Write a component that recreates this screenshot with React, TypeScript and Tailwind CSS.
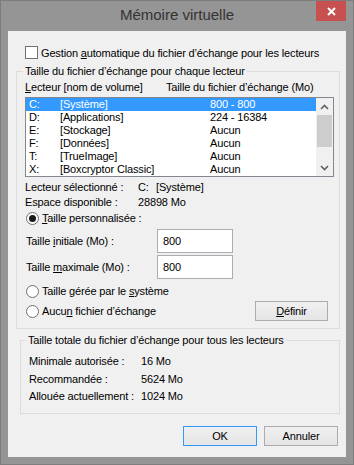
import React from "react";

const rows = [
  { l: "C:", n: "[Système]", s: "800 - 800", sel: true },
  { l: "D:", n: "[Applications]", s: "224 - 16384" },
  { l: "E:", n: "[Stockage]", s: "Aucun" },
  { l: "F:", n: "[Données]", s: "Aucun" },
  { l: "T:", n: "[TrueImage]", s: "Aucun" },
  { l: "X:", n: "[Boxcryptor Classic]", s: "Aucun" },
];

function Radio({ checked }: { checked?: boolean }) {
  return (
    <div className="w-[13px] h-[13px] rounded-full border border-[#707070] bg-white flex items-center justify-center shrink-0">
      {checked && <div className="w-[7px] h-[7px] rounded-full bg-[#1a1a1a]" />}
    </div>
  );
}

function Chevron({ up }: { up?: boolean }) {
  return (
    <svg width="9" height="6" viewBox="0 0 9 6">
      <polyline
        points={up ? "1,5 4.5,1.5 8,5" : "1,1 4.5,4.5 8,1"}
        fill="none"
        stroke="#606060"
        strokeWidth="1.6"
      />
    </svg>
  );
}

export default function App() {
  const font = { fontFamily: '"Liberation Sans", Arial, sans-serif' };
  return (
    <div
      className="w-[354px] h-[465px] bg-[#959595] border border-[#7d7d7d] flex flex-col text-[11px] text-black tracking-[-0.15px]"
      style={font}
    >
      {/* Title bar */}
      <div className="h-[30px] grid grid-cols-[1fr_auto_1fr] items-start">
        <div />
        <div className="h-[29px] flex items-center text-[15px] text-[#333333] tracking-normal">Mémoire virtuelle</div>
        <div className="flex justify-end pr-[7px]">
          <div className="w-[30px] h-[20px] bg-[#c75050] flex items-center justify-center">
            <svg width="9" height="9" viewBox="0 0 9 9">
              <path d="M1 1 L8 8 M8 1 L1 8" stroke="white" strokeWidth="2" />
            </svg>
          </div>
        </div>
      </div>

      {/* Client area */}
      <div className="ml-[7px] w-[338px] h-[426px] bg-[#f0f0f0] flex flex-col leading-[14px]">
        <div className="pt-[15px] pl-[17px] flex items-center h-[28px] gap-[3px]">
          <div className="w-[13px] h-[13px] border border-[#707070] bg-white shrink-0" />
          <span>
            Gestion <span className="underline">a</span>utomatique du fichier d’échange pour les lecteurs
          </span>
        </div>

        <fieldset className="mt-[5px] ml-[8px] w-[324px] border border-[#dcdcdc] pb-[7px]">
          <legend className="ml-[6px] px-[2px] h-[15px] leading-[15px]">
            Taille du fichier d’échange pour chaque lecteur
          </legend>
          <div className="mt-[1px] h-[14px] flex items-center pl-[8px]">
            <span className="w-[141px]">
              <span className="underline">L</span>ecteur [nom de volume]
            </span>
            <span>Taille du fichier d’échange (Mo)</span>
          </div>
          <div className="mt-[3px] ml-[8px] w-[309px] h-[80px] border border-[#828790] bg-white flex">
            <div className="flex-1 flex flex-col">
              {rows.map((r) => (
                <div
                  key={r.l}
                  className={
                    "h-[13px] flex items-center leading-[13px] " +
                    (r.sel ? "bg-[#3399ff] text-white" : "")
                  }
                >
                  <span className="w-[34px] pl-[3px]">{r.l}</span>
                  <span className="w-[150px]">{r.n}</span>
                  <span>{r.s}</span>
                </div>
              ))}
            </div>
            <div className="w-[17px] bg-[#f0f0f0] flex flex-col">
              <div className="h-[17px] flex items-center justify-center">
                <Chevron up />
              </div>
              <div className="h-[32px] bg-[#cdcdcd] mx-[1px]" />
              <div className="flex-1" />
              <div className="h-[17px] flex items-center justify-center">
                <Chevron />
              </div>
            </div>
          </div>

          <div className="mt-[3px] h-[14px] pl-[8px] flex items-center">
            <span className="w-[113px]">Lecteur sélectionné :</span>
            <span className="w-[18px]">C:</span>
            <span>[Système]</span>
          </div>
          <div className="mt-[1px] h-[14px] pl-[8px] flex items-center">
            <span className="w-[113px]">Espace disponible :</span>
            <span>28898 Mo</span>
          </div>
          <div className="mt-[2px] h-[14px] pl-[9px] flex items-center gap-[3px]">
            <Radio checked />
            <span>
              <span className="underline">T</span>aille personnalisée :
            </span>
          </div>
          <div className="mt-[4px] h-[24px] pl-[9px] flex items-center">
            <span className="w-[131px]">
              Taille <span className="underline">i</span>nitiale (Mo) :
            </span>
            <div className="w-[76px] h-[24px] border border-[#abadb3] bg-white pl-[5px] flex items-center">
              800
            </div>
          </div>
          <div className="mt-[2px] h-[24px] pl-[9px] flex items-center">
            <span className="w-[131px]">
              Taille <span className="underline">m</span>aximale (Mo) :
            </span>
            <div className="w-[76px] h-[24px] border border-[#abadb3] bg-white pl-[5px] flex items-center">
              800
            </div>
          </div>
          <div className="mt-[5px] h-[14px] pl-[9px] flex items-center gap-[3px]">
            <Radio />
            <span>
              Taille gérée par le <span className="underline">s</span>ystème
            </span>
          </div>
          <div className="mt-[3px] h-[20px] pl-[9px] pr-[11px] flex items-center justify-between">
            <div className="flex items-center gap-[3px]">
              <Radio />
              <span>
                Aucu<span className="underline">n</span> fichier d’échange
              </span>
            </div>
            <div className="w-[73px] h-[20px] border border-[#acacac] bg-gradient-to-b from-[#f0f0f0] to-[#e5e5e5] flex items-center justify-center">
              <span>
                <span className="underline">D</span>éfinir
              </span>
            </div>
          </div>
        </fieldset>

        <fieldset className="mt-[4px] ml-[12px] w-[320px] border border-[#dcdcdc] pb-[10px]">
          <legend className="ml-[5px] px-[2px] h-[15px] leading-[15px]">
            Taille totale du fichier d’échange pour tous les lecteurs
          </legend>
          <div className="mt-[6px] h-[14px] pl-[8px] flex items-center">
            <span className="w-[112px]">Minimale autorisée :</span>
            <span>16 Mo</span>
          </div>
          <div className="mt-[4px] h-[14px] pl-[8px] flex items-center">
            <span className="w-[112px]">Recommandée :</span>
            <span>5624 Mo</span>
          </div>
          <div className="mt-[3px] h-[14px] pl-[8px] flex items-center">
            <span className="w-[112px]">Allouée actuellement :</span>
            <span>1024 Mo</span>
          </div>
        </fieldset>

        <div className="mt-[12px] flex justify-end gap-[7px] pr-[8px]">
          <div className="w-[74px] h-[20px] border border-[#3399ff] bg-gradient-to-b from-[#f0f0f0] to-[#e5e5e5] flex items-center justify-center">
            OK
          </div>
          <div className="w-[74px] h-[20px] border border-[#acacac] bg-gradient-to-b from-[#f0f0f0] to-[#e5e5e5] flex items-center justify-center">
            Annuler
          </div>
        </div>
      </div>
    </div>
  );
}
